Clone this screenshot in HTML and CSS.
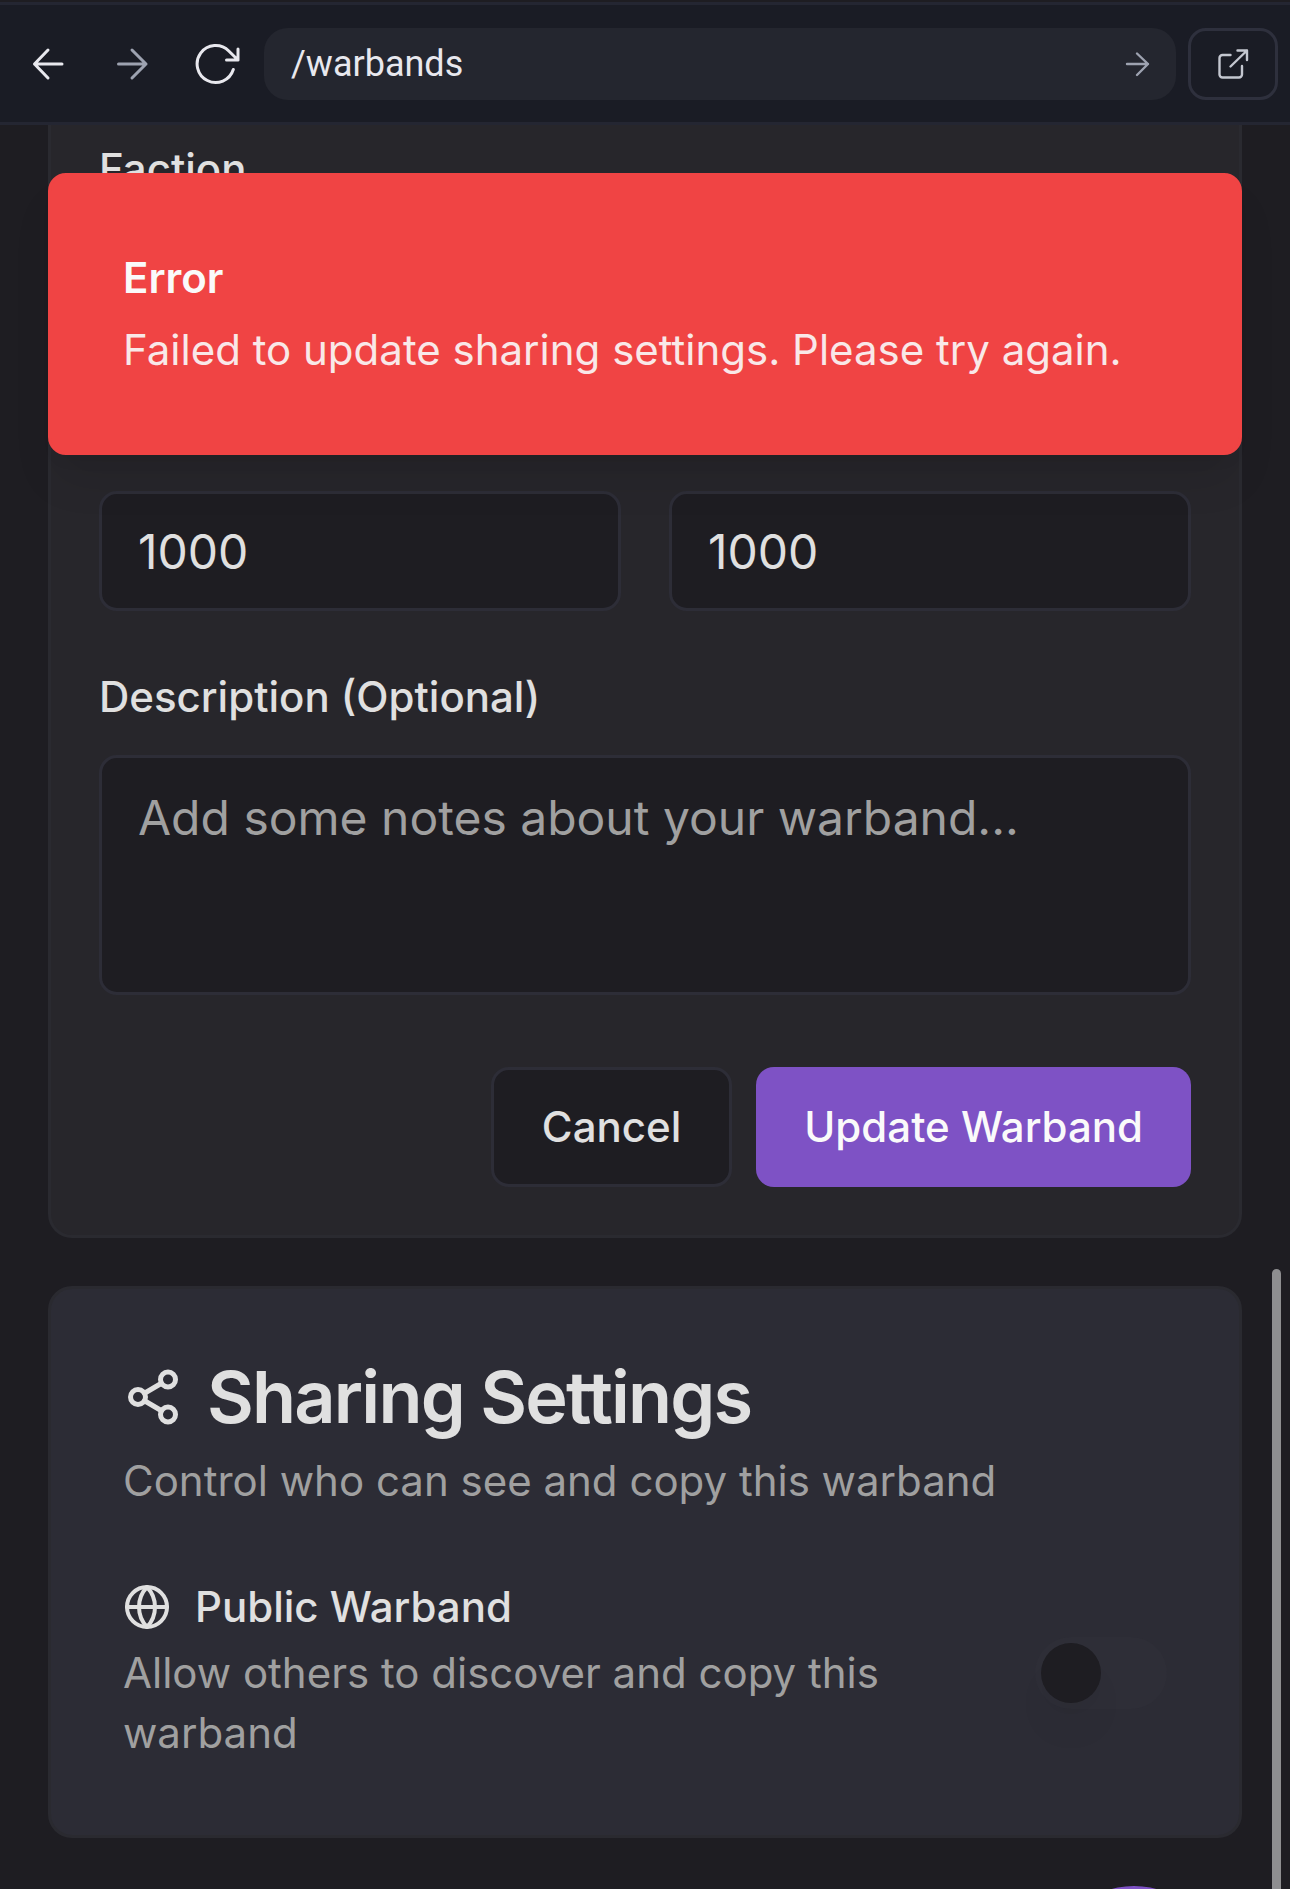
FILE: index.html
```html
<!DOCTYPE html>
<html lang="en">
<head>
  <meta charset="utf-8">
  <meta name="viewport" content="width=device-width, initial-scale=1">
  <title>Warbands</title>
  <link rel="stylesheet" href="styles.css">
</head>
<body>
  <header class="toolbar">
    <nav class="toolbar-nav" aria-label="History">
      <button class="icon-button" type="button" aria-label="Back">
        <svg class="icon-nav" viewBox="0 0 48 48"><path d="M38 24H10.500M24 10 10.500 24 24 38"/></svg>
      </button>
      <button class="icon-button icon-button-muted" type="button" aria-label="Forward">
        <svg class="icon-nav" viewBox="0 0 48 48"><path d="M10.500 24H38M24 10l14 14-14 14"/></svg>
      </button>
      <button class="icon-button" type="button" aria-label="Reload">
        <svg class="icon-nav" viewBox="0 0 48 48"><path d="M41.300 29.500A18.500 18.500 0 1 1 36.800 11l9.200 9M46 9v11H34.500"/></svg>
      </button>
    </nav>
    <form class="address">
      <input class="address-input" type="text" value="/warbands" aria-label="Path">
      <button class="icon-button icon-button-muted" type="button" aria-label="Go">
        <svg class="icon-go" viewBox="0 0 36 36"><path d="M8 18h21M18 7.500 29 18 18 29"/></svg>
      </button>
    </form>
    <button class="open-button" type="button" aria-label="Open in new tab">
      <svg class="icon-go" viewBox="0 0 36 36"><path d="M15.500 9H7.500a3 3 0 0 0-3 3v16.500a3 3 0 0 0 3 3h16.500a3 3 0 0 0 3-3V20M22.500 4.500h9.500v9.500M32 4.500 15.500 20.500"/></svg>
    </button>
  </header>

  <main class="page">
    <form class="card card-form">
      <div class="field">
        <label class="label" for="faction">Faction</label>
        <select class="control" id="faction"></select>
      </div>
      <div class="field-row">
        <div class="field">
          <label class="label" for="points">Points</label>
          <input class="control" id="points" type="text" inputmode="numeric" value="1000">
        </div>
        <div class="field">
          <label class="label" for="limit">Limit</label>
          <input class="control" id="limit" type="text" inputmode="numeric" value="1000">
        </div>
      </div>
      <div class="field">
        <label class="label" for="description">Description (Optional)</label>
        <textarea class="control control-area" id="description" placeholder="Add some notes about your warband..."></textarea>
      </div>
      <div class="actions">
        <button class="button button-outline" type="button">Cancel</button>
        <button class="button button-primary" type="submit">Update Warband</button>
      </div>
    </form>

    <section class="card card-sharing">
      <div class="card-header">
        <h2 class="card-title">
          <svg class="icon-share" viewBox="0 0 24 24"><circle cx="18" cy="5" r="3"/><circle cx="6" cy="12" r="3"/><circle cx="18" cy="19" r="3"/><path d="m8.590 13.510 6.830 3.980M15.410 6.510l-6.820 3.980"/></svg>
          Sharing Settings
        </h2>
        <p class="muted">Control who can see and copy this warband</p>
      </div>
      <div class="setting">
        <div class="setting-text">
          <label class="setting-label" for="public">
            <svg class="icon-globe" viewBox="0 0 24 24"><circle cx="12" cy="12" r="10"/><path d="M12 2a14.500 14.500 0 0 0 0 20 14.500 14.500 0 0 0 0-20M2 12h20"/></svg>
            Public Warband
          </label>
          <p class="muted">Allow others to discover and copy this warband</p>
        </div>
        <input class="switch" id="public" type="checkbox" role="switch">
      </div>
    </section>

    <div class="toast" role="alert">
      <p class="toast-title">Error</p>
      <p class="toast-text">Failed to update sharing settings. Please try again.</p>
    </div>
    <button class="fab" type="button" aria-label="Add"></button>
    <div class="scroll-thumb"></div>
  </main>
</body>
</html>
```

FILE: styles.css
```css
* {
  box-sizing: border-box;
}

body {
  display: flex;
  flex-direction: column;
  height: 100vh;
  margin: 0;
  overflow: hidden;
  background: #1e1d22;
  color: #e0e0e0;
  font-family: Inter, "Liberation Sans", sans-serif;
  font-size: 48px;
  line-height: 72px;
  font-optical-sizing: none;
}

h2,
p {
  margin: 0;
}

button,
input,
select,
textarea {
  margin: 0;
  font: inherit;
  color: inherit;
  font-optical-sizing: none;
}

svg {
  display: block;
  flex: none;
  fill: none;
  stroke: currentColor;
  stroke-linecap: round;
  stroke-linejoin: round;
}

/* Browser bar */

.toolbar {
  display: flex;
  flex: none;
  align-items: center;
  gap: 12px;
  margin-top: 2px;
  padding: 23px 12px 22px 24px;
  border-top: 3px solid #242632;
  border-bottom: 3px solid #242632;
  background: #1a1c25;
  color: #e8e8ee;
}

.toolbar-nav {
  display: flex;
  gap: 36px;
  padding-right: 12px;
}

.icon-button {
  display: flex;
  padding: 0;
  border: 0;
  background: none;
}

.icon-button-muted {
  color: #9da2b0;
}

.icon-nav {
  width: 48px;
  height: 48px;
  stroke-width: 3;
}

.icon-go {
  width: 36px;
  height: 36px;
  stroke-width: 2.4;
}

.address {
  display: flex;
  flex: 1;
  align-items: center;
  height: 72px;
  padding: 0 21px 0 27px;
  border-radius: 24px;
  background: #24262f;
}

.address-input {
  flex: 1;
  min-width: 0;
  padding: 0;
  border: 0;
  background: none;
  font-family: Roboto, "Liberation Sans", sans-serif;
  font-size: 36px;
  line-height: 48px;
}

.open-button {
  display: flex;
  align-items: center;
  justify-content: center;
  width: 90px;
  height: 72px;
  padding: 0;
  border: 3px solid #2e303d;
  border-radius: 18px;
  background: none;
  color: #c4c7d0;
}

/* Page */

.page {
  position: relative;
  display: flex;
  flex: 1;
  flex-direction: column;
  gap: 48px;
  min-height: 0;
  padding: 0 48px;
  overflow: hidden;
}

.card {
  flex: none;
  border: 3px solid #2a2a30;
  border-radius: 24px;
}

.card-form {
  display: flex;
  flex-direction: column;
  gap: 48px;
  padding: 6px 48px 48px;
  border-top: 0;
  border-top-left-radius: 0;
  border-top-right-radius: 0;
  background: #27262b;
}

.field-row {
  display: grid;
  grid-template-columns: 1fr 1fr;
  gap: 48px;
}

.label {
  font-size: 42px;
  font-weight: 500;
  line-height: 42px;
}

.control {
  display: block;
  width: 100%;
  height: 120px;
  margin-top: 24px;
  padding: 21px 36px;
  border: 3px solid #2d2d37;
  border-radius: 18px;
  background: #1e1d22;
}

.control-area {
  height: 240px;
  padding: 24px 36px;
  resize: none;
}

.control::placeholder {
  color: #a0a0a0;
  opacity: 1;
}

.actions {
  display: flex;
  justify-content: flex-end;
  gap: 24px;
  padding-top: 24px;
}

.button {
  height: 120px;
  padding: 0 48px;
  border: 0;
  border-radius: 18px;
  font-size: 42px;
  font-weight: 500;
  line-height: 60px;
}

.button-outline {
  border: 3px solid #2d2d37;
  background: #1e1d22;
}

.button-primary {
  background: #7e52c5;
  color: #fafafa;
}

/* Sharing */

.card-sharing {
  display: flex;
  flex-direction: column;
  gap: 72px;
  padding: 72px;
  background: #2c2c35;
}

.card-header {
  display: flex;
  flex-direction: column;
  gap: 18px;
}

.card-title {
  display: flex;
  align-items: center;
  gap: 24px;
  font-size: 72px;
  font-weight: 600;
  line-height: 72px;
  letter-spacing: -0.025em;
}

.icon-share {
  width: 60px;
  height: 60px;
  stroke-width: 2;
}

.muted {
  color: #a0a0a0;
  font-size: 42px;
  line-height: 60px;
}

.setting {
  display: flex;
  align-items: center;
  justify-content: space-between;
}

.setting-text {
  display: flex;
  flex-direction: column;
  gap: 12px;
}

.setting-label {
  display: flex;
  align-items: center;
  gap: 24px;
  font-size: 42px;
  font-weight: 500;
  line-height: 48px;
}

.icon-globe {
  width: 48px;
  height: 48px;
  stroke-width: 2;
}

.switch {
  display: flex;
  flex: none;
  width: 132px;
  height: 72px;
  padding: 6px;
  border-radius: 36px;
  background: #2e2e37;
  appearance: none;
}

.switch::before {
  width: 60px;
  height: 60px;
  border-radius: 50%;
  background: #1e1d22;
  box-shadow: 0 30px 45px -9px rgba(0, 0, 0, 0.06), 0 12px 18px -12px rgba(0, 0, 0, 0.06);
  content: "";
}

.switch:checked {
  justify-content: flex-end;
  background: #7e52c5;
}

/* Overlays */

.toast {
  position: absolute;
  top: 48px;
  right: 48px;
  left: 48px;
  display: flex;
  flex-direction: column;
  gap: 12px;
  padding: 72px;
  border: 3px solid #f04444;
  border-radius: 18px;
  background: #f04444;
  box-shadow: 0 30px 45px -9px rgba(0, 0, 0, 0.1), 0 12px 18px -12px rgba(0, 0, 0, 0.1);
  color: #fafafa;
  font-size: 42px;
  line-height: 60px;
}

.toast-title {
  font-weight: 600;
}

.toast-text {
  opacity: 0.9;
}

.fab {
  position: absolute;
  right: 72px;
  bottom: -165px;
  width: 168px;
  height: 168px;
  padding: 0;
  border: 0;
  border-radius: 50%;
  background: #7e52c5;
}

.scroll-thumb {
  position: absolute;
  right: 9px;
  bottom: -9px;
  width: 9px;
  height: 629px;
  border-radius: 5px;
  background: #8e8e90;
}
```
